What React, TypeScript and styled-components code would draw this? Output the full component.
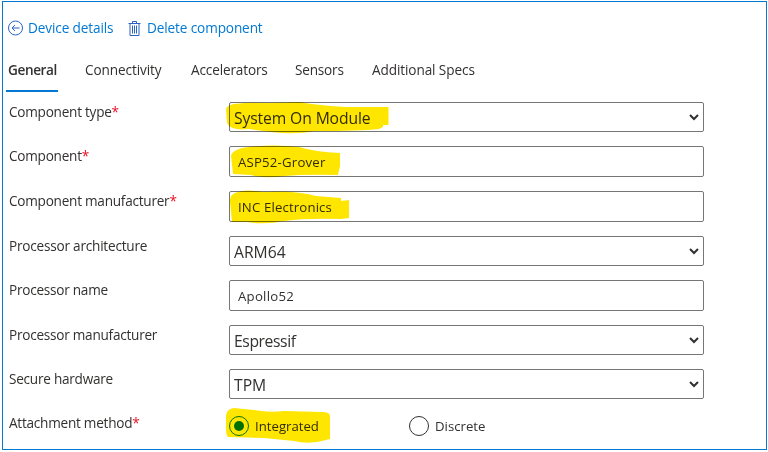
import React from "react";
import styled, { createGlobalStyle, css } from "styled-components";

const GlobalStyle = createGlobalStyle`
  * { box-sizing: border-box; }
  body {
    margin: 0;
    background: #fff;
    color: #323130;
    font-family: "Open Sans", "Noto Sans", sans-serif;
    font-size: 13.6px;
    font-weight: 375;
  }
`;

const Page = styled.div`
  width: 768px;
  height: 452px;
  padding: 1px 1px 2px 2px;
  overflow: hidden;
`;

const Panel = styled.main`
  height: 449px;
  border: 1px solid #0078d4;
`;

const CommandBar = styled.nav`
  display: flex;
  gap: 14px;
  height: 52px;
  padding-left: 5px;
  align-items: center;
`;

const Command = styled.a<{ $width: number; $track: number }>`
  display: flex;
  align-items: center;
  gap: 5px;
  width: ${(p) => p.$width}px;
  color: #0078d4;
  line-height: 20px;
  letter-spacing: ${(p) => p.$track}px;
  white-space: nowrap;
  svg { flex: none; }
`;

const TabList = styled.div`
  display: flex;
  height: 38px;
  padding-left: 3px;
  margin-bottom: 10px;
`;

const Tab = styled.div<{ $width: number; $track: number; $active?: boolean }>`
  width: ${(p) => p.$width}px;
  padding: 6px 0 0 2px;
  line-height: 20px;
  letter-spacing: ${(p) => p.$track}px;
  white-space: nowrap;
  ${(p) =>
    p.$active &&
    css`
      width: 52px;
      margin-right: ${p.$width - 52}px;
      font-weight: 600;
      border-bottom: 2px solid #0078d4;
    `}
`;

const Form = styled.form`
  display: grid;
  grid-template-rows: 44px 45px 45px 44px 45px 44px 44px 34px;
`;

const Row = styled.div`
  display: grid;
  grid-template-columns: 220px 475px;
  padding-left: 6px;
`;

const Label = styled.label<{ $track: number }>`
  line-height: 20px;
  letter-spacing: ${(p) => p.$track}px;
  white-space: nowrap;
`;

const Required = styled.span`
  color: #e81123;
`;

const Field = styled.div<{ $select?: boolean }>`
  position: relative;
  display: flex;
  align-items: center;
  justify-content: space-between;
  height: ${(p) => (p.$select ? 30 : 31)}px;
  padding: ${(p) => (p.$select ? "2px 4px 0 4px" : "1px 8px 0")};
  border: 1px solid #767676;
  border-radius: 2px;
  font-size: ${(p) => (p.$select ? 15.7 : 13.2)}px;
`;

const Value = styled.span<{ $track: number }>`
  letter-spacing: ${(p) => p.$track}px;
  white-space: nowrap;
`;

const Chevron = styled.svg`
  flex: none;
  margin-top: -1px;
`;

const RadioGroup = styled.div`
  position: relative;
  display: flex;
  height: 26px;
`;

const Option = styled.label`
  display: flex;
  align-items: center;
  gap: 6px;
  width: 180px;
  font-size: 13.2px;
`;

const Dial = styled.span<{ $checked?: boolean }>`
  display: grid;
  place-items: center;
  width: 20px;
  height: 20px;
  border: 1px solid ${(p) => (p.$checked ? "#0a7d0a" : "#323130")};
  border-radius: 50%;
  &::after {
    content: "";
    width: 10px;
    height: 10px;
    border-radius: 50%;
    background: ${(p) => (p.$checked ? "#007c00" : "transparent")};
  }
`;

const Marker = styled.svg`
  position: absolute;
  left: -5px;
  top: -5px;
  overflow: visible;
  mix-blend-mode: multiply;
  pointer-events: none;
`;

const Highlight = ({ d }: { d: string }) => (
  <Marker width="170" height="40" aria-hidden="true">
    <path d={d} fill="#ffe600" />
  </Marker>
);

const BackIcon = () => (
  <svg width="15" height="16" viewBox="0 0 15 16" fill="none" stroke="#2b62c4">
    <circle cx="7.5" cy="8" r="7" />
    <path d="M11.5 8H4.2M7 5L4 8l3 3" />
  </svg>
);

const TrashIcon = () => (
  <svg width="14" height="17" viewBox="0 0 14 17" fill="none" stroke="#2b62c4">
    <path d="M.5 3.5h12M4.5 3V1.5h4V3M2 3.5v12h9v-12M4.5 5.5v8M6.5 5.5v8M8.5 5.5v8" />
  </svg>
);

const tabs = [
  { name: "General", width: 77, track: -0.4 },
  { name: "Connectivity", width: 106, track: -0.1 },
  { name: "Accelerators", width: 104, track: -0.15 },
  { name: "Sensors", width: 77, track: -0.2 },
  { name: "Additional Specs", width: 110, track: -0.1 },
];

type FieldSpec = {
  label: string;
  track: number;
  value: string;
  valueTrack: number;
  required?: boolean;
  select?: boolean;
  mark?: string;
};

const fields: FieldSpec[] = [
  {
    label: "Component type", track: -0.25, value: "System On Module", valueTrack: -0.12, required: true, select: true,
    mark: "M1 11Q2 7 9 6Q25 4 45 5L74 4Q90 7 120 9L163.500 9V27L158 27V29L154 31Q135 33 90 33Q70 37 46 34L24 31Q5 33 2 25Z",
  },
  {
    label: "Component", track: -0.25, value: "ASP52-Grover", valueTrack: 0.2, required: true,
    mark: "M6 14Q7 7 24 5Q50 2 74 5Q90 10 115 11V24L113 33Q80 32 60 34Q40 37 26 33L8 32Z",
  },
  {
    label: "Component manufacturer", track: -0.25, value: "INC Electronics", valueTrack: 0.15, required: true,
    mark: "M5 15Q4 7 13 5Q20 2 38 5Q70 3 91 9L116 11V14L124 13V31L116 32Q80 31 60 34Q40 38 22 35L7 35Z",
  },
  { label: "Processor architecture", track: -0.22, value: "ARM64", valueTrack: 0, select: true },
  { label: "Processor name", track: -0.25, value: "Apollo52", valueTrack: 0.25 },
  { label: "Processor manufacturer", track: -0.25, value: "Espressif", valueTrack: -0.4, select: true },
  { label: "Secure hardware", track: -0.25, value: "TPM", valueTrack: 0, select: true },
];

export default function App() {
  return (
    <Page>
      <GlobalStyle />
      <Panel>
        <CommandBar>
          <Command $width={106} $track={-0.12}><BackIcon />Device details</Command>
          <Command $width={140} $track={-0.12}><TrashIcon />Delete component</Command>
        </CommandBar>
        <TabList>
          {tabs.map((t, i) => (
            <Tab key={t.name} $width={t.width} $track={t.track} $active={i === 0}>{t.name}</Tab>
          ))}
        </TabList>
        <Form>
          {fields.map((f) => (
            <Row key={f.label}>
              <Label $track={f.track}>{f.label}{f.required && <Required>*</Required>}</Label>
              <Field $select={f.select}>
                <Value $track={f.valueTrack}>{f.value}</Value>
                {f.select && (
                  <Chevron width="10" height="7" viewBox="0 0 10 7" fill="none" stroke="#323130" strokeWidth="2">
                    <path d="M1 1l4 4 4-4" />
                  </Chevron>
                )}
                {f.mark && <Highlight d={f.mark} />}
              </Field>
            </Row>
          ))}
          <Row>
            <Label $track={-0.25}>Attachment method<Required>*</Required></Label>
            <RadioGroup>
              <Option><Dial $checked /><Value $track={0}>Integrated</Value></Option>
              <Option><Dial /><Value $track={0}>Discrete</Value></Option>
              <Highlight d="M2 7Q3 1 10 0L30 2Q45 5 60 3L98 4Q106 4 106 8V31L102 32Q85 37 70 33L40 30L4 29Q2 28 2 20Z" />
            </RadioGroup>
          </Row>
        </Form>
      </Panel>
    </Page>
  );
}
